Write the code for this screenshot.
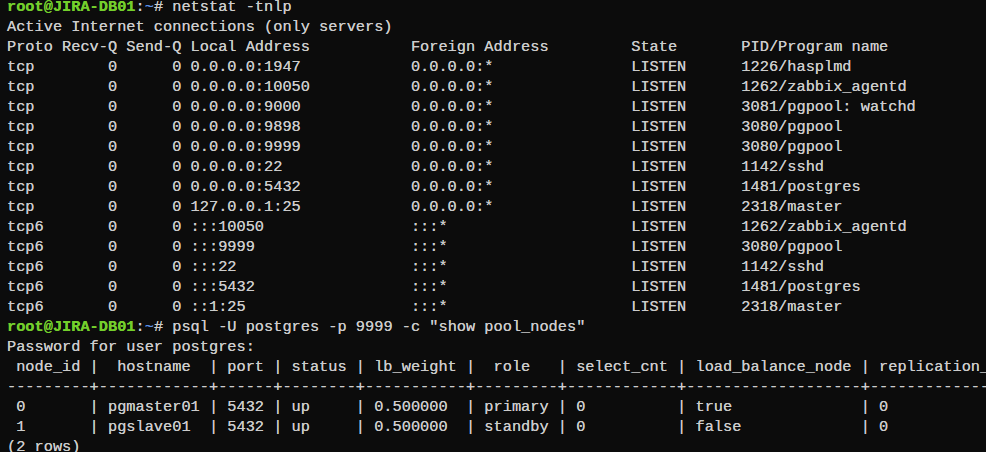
const prompt = "root@JIRA-DB01";

const netstat = [
  "Active Internet connections (only servers)",
  "Proto Recv-Q Send-Q Local Address           Foreign Address         State       PID/Program name",
  "tcp        0      0 0.0.0.0:1947            0.0.0.0:*               LISTEN      1226/hasplmd",
  "tcp        0      0 0.0.0.0:10050           0.0.0.0:*               LISTEN      1262/zabbix_agentd",
  "tcp        0      0 0.0.0.0:9000            0.0.0.0:*               LISTEN      3081/pgpool: watchd",
  "tcp        0      0 0.0.0.0:9898            0.0.0.0:*               LISTEN      3080/pgpool",
  "tcp        0      0 0.0.0.0:9999            0.0.0.0:*               LISTEN      3080/pgpool",
  "tcp        0      0 0.0.0.0:22              0.0.0.0:*               LISTEN      1142/sshd",
  "tcp        0      0 0.0.0.0:5432            0.0.0.0:*               LISTEN      1481/postgres",
  "tcp        0      0 127.0.0.1:25            0.0.0.0:*               LISTEN      2318/master",
  "tcp6       0      0 :::10050                :::*                    LISTEN      1262/zabbix_agentd",
  "tcp6       0      0 :::9999                 :::*                    LISTEN      3080/pgpool",
  "tcp6       0      0 :::22                   :::*                    LISTEN      1142/sshd",
  "tcp6       0      0 :::5432                 :::*                    LISTEN      1481/postgres",
  "tcp6       0      0 ::1:25                  :::*                    LISTEN      2318/master",
];

const psql = [
  "Password for user postgres:",
  " node_id |  hostname  | port | status | lb_weight |  role   | select_cnt | load_balance_node | replication_delay",
  "---------+------------+------+--------+-----------+---------+------------+-------------------+-------------------",
  " 0       | pgmaster01 | 5432 | up     | 0.500000  | primary | 0          | true              | 0",
  " 1       | pgslave01  | 5432 | up     | 0.500000  | standby | 0          | false             | 0",
  "(2 rows)",
];

function Prompt({ cmd }: { cmd: string }) {
  return (
    <div className="h-[20px]">
      <span className="text-[#74cf2c] font-bold">{prompt}</span>
      <span>:</span>
      <span className="text-[#5b8fe6]">~</span>
      <span># {cmd}</span>
    </div>
  );
}

function Line({ text }: { text: string }) {
  return <div className="h-[20px]">{text}</div>;
}

export default function App() {
  return (
    <main className="w-[986px] h-[452px] overflow-hidden bg-[#0c0c0c] text-[#cccccc]">
      <div
        className="-mt-[3px] pl-[7px] whitespace-pre text-[15.3px] leading-[20px] [text-shadow:0_0_0.6px_currentColor]"
        style={{ fontFamily: '"Liberation Mono", "DejaVu Sans Mono", monospace' }}
      >
        <Prompt cmd="netstat -tnlp" />
        {netstat.map((l, i) => (
          <Line key={"n" + i} text={l} />
        ))}
        <Prompt cmd={'psql -U postgres -p 9999 -c "show pool_nodes"'} />
        {psql.map((l, i) => (
          <Line key={"p" + i} text={l} />
        ))}
      </div>
    </main>
  );
}
